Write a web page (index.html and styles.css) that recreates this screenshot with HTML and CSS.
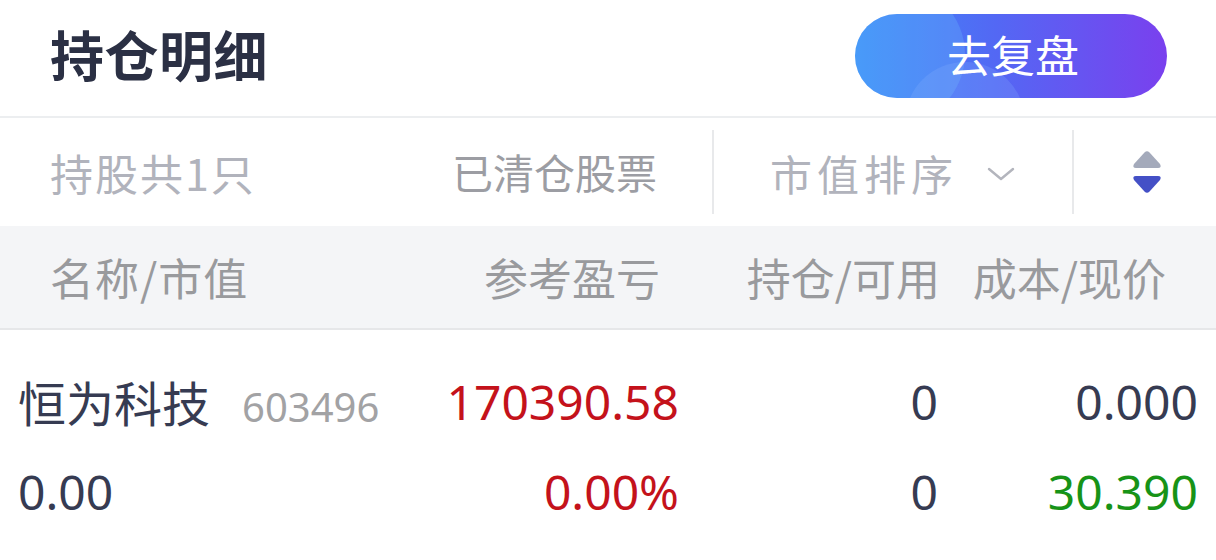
FILE: index.html
```html
<!DOCTYPE html>
<html lang="zh-CN">
<head>
    <meta charset="UTF-8">
    <meta name="viewport" content="width=device-width, initial-scale=1.0">
    <title>持仓明细</title>
    <link rel="stylesheet" href="styles.css">
</head>
<body>

    <!-- 标题栏 -->
    <header class="titulo">
        <h1>持仓明细</h1>
        <button class="btn-fupan">去复盘</button>
    </header>

    <!-- 筛选栏 -->
    <div class="filtro">
        <div class="filtro-izq">
            <span class="cuenta">持股共1只</span>
            <span class="cerrados">已清仓股票</span>
        </div>
        <div class="sep"></div>
        <div class="orden">
            <span>市值排序</span>
            <svg class="flecha" width="30" height="18" viewBox="0 0 30 18">
                <path d="M3 4 L15 14 L27 4" fill="none" stroke="#b3b5bd" stroke-width="2.4" stroke-linecap="round" stroke-linejoin="round"/>
            </svg>
        </div>
        <div class="sep"></div>
        <div class="icono-orden">
            <svg width="32" height="46" viewBox="0 0 32 46">
                <path d="M13.5 3.5 Q16 1 18.5 3.5 L29 15 Q31 19 27 19 L5 19 Q1 19 3 15 Z" fill="#a4aabb"/>
                <path d="M13.5 42.5 Q16 45 18.5 42.5 L29 31 Q31 27 27 27 L5 27 Q1 27 3 31 Z" fill="#4450c6"/>
            </svg>
        </div>
    </div>

    <!-- 表头 -->
    <div class="cabecera">
        <span>名称/市值</span>
        <span class="der">参考盈亏</span>
        <span class="der">持仓/可用</span>
        <span class="der">成本/现价</span>
    </div>

    <!-- 持仓 -->
    <div class="posiciones">
        <div class="fila">
            <span class="nombre">恒为科技<small>603496</small></span>
            <span class="der rojo">170390.58</span>
            <span class="der">0</span>
            <span class="der">0.000</span>
        </div>
        <div class="fila">
            <span>0.00</span>
            <span class="der rojo">0.00%</span>
            <span class="der">0</span>
            <span class="der verde">30.390</span>
        </div>
    </div>

</body>
</html>
```

FILE: styles.css
```css
body { margin: 0; background: #fff; font-family: "Noto Sans", "Noto Sans CJK SC", sans-serif; color: #363b52; }

.titulo { height: 118px; box-sizing: border-box; display: flex; align-items: center; justify-content: space-between; padding: 0 49px 8px 50px; border-bottom: 2px solid #eceef0; }
.titulo h1 { margin: 0; font-size: 54px; font-weight: 700; color: #2b3044; letter-spacing: 0.5px; font-family: "Noto Sans CJK SC", sans-serif; line-height: 1; }
.btn-fupan { position: relative; overflow: hidden; width: 312px; height: 84px; border: none; border-radius: 42px; margin-top: 4px; background: linear-gradient(90deg, #3b8cf7 0%, #5368f4 45%, #7a40ee 100%); color: #fff; font-size: 44px; line-height: 1; font-family: "Noto Sans CJK SC", sans-serif; padding: 0 0 4px 4px; letter-spacing: 0; cursor: pointer; }
.btn-fupan span, .btn-fupan { z-index: 0; }
.btn-fupan::before { content: ""; position: absolute; z-index: -1; left: -30px; top: -30px; width: 140px; height: 140px; border-radius: 50%; background: rgba(110, 200, 255, 0.25); }
.btn-fupan::after { content: ""; position: absolute; z-index: -1; left: 50px; top: 48px; width: 120px; height: 120px; border-radius: 50%; background: rgba(140, 180, 255, 0.22); }

.filtro { height: 108px; display: flex; align-items: center; font-size: 41px; font-family: "Noto Sans CJK SC", sans-serif; }
.filtro-izq { flex: 1; display: flex; justify-content: space-between; padding: 0 55px 0 50px; }
.cuenta { color: #b1b3bc; font-size: 43px; letter-spacing: 2px; }
.cerrados { color: #9c9da3; }
.sep { width: 2px; height: 84px; background: #e8e9eb; }
.orden { width: 358px; display: flex; align-items: center; justify-content: center; gap: 28px; color: #b1b3bc; letter-spacing: 5px; font-size: 42px; }
.flecha { margin-top: 4px; }
.icono-orden { width: 142px; display: flex; justify-content: center; padding-left: 4px; box-sizing: border-box; }

.cabecera { height: 102px; background: #f4f5f7; border-bottom: 2px solid #e6e7e9; display: grid; grid-template-columns: 390px 220px 280px 226px; padding: 0 50px; align-items: center; font-size: 44px; color: #999a9d; font-family: "Noto Sans CJK SC", sans-serif; }
.cabecera span:first-child { letter-spacing: 1px; }
.der { text-align: right; }

.posiciones { padding-top: 26px; }
.fila { height: 90px; display: grid; grid-template-columns: 422px 239px 259px 260px; padding: 0 18px; align-items: center; font-size: 48px; }
.nombre { font-family: "Noto Sans CJK SC", sans-serif; display: flex; align-items: baseline; }
.nombre small { font-family: "Noto Sans", sans-serif; font-size: 40px; color: #a2a2a4; margin-left: 32px; }
.rojo { color: #c4121b; }
.verde { color: #179317; }
```
